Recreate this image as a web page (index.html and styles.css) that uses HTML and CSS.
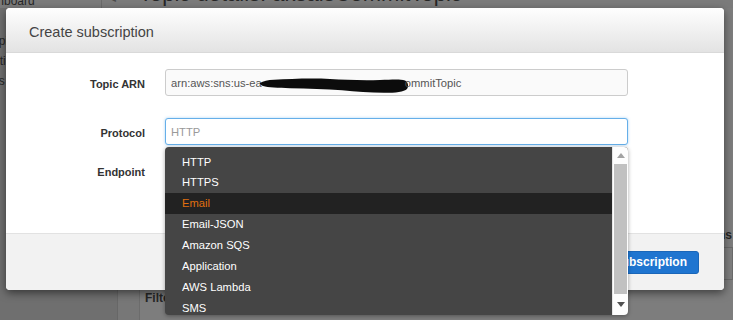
FILE: index.html
```html
<!DOCTYPE html>
<html>
<head>
<meta charset="utf-8">
<title>Create subscription</title>
<link rel="stylesheet" href="styles.css">
</head>
<body>
<div class="page">
  <header class="topbar">
    <div class="crumb"><span class="crumb-text">Dashboard</span></div>
    <span class="back">&#9664;</span>
    <h1 class="page-title">Topic details: aksalsCommitTopic</h1>
  </header>
  <div class="content">
    <nav class="sidebar">
      <div class="nav-item nav-topics">Topics</div>
      <div class="nav-item nav-subs">Subscriptions</div>
      <div class="nav-item nav-apps">Applications</div>
    </nav>
    <main class="main">
      <div class="panel">
        <div class="panel-tools"><span class="panel-label">Other subscription actions</span></div>
        <div class="panel-box"></div>
        <div class="filter-row"><span class="filter-label">Filter</span></div>
      </div>
    </main>
  </div>
</div>

<div class="modal">
  <div class="modal-header">Create subscription</div>
  <div class="modal-body">
    <div class="form-row">
      <label class="form-label">Topic ARN</label>
      <div class="field">
        <div class="input input-readonly"><span>arn:aws:sns:us-ea</span><span class="redacted"><svg width="148" height="20" viewBox="0 0 148 20"><path d="M0,9 C3,7 8,6 14,5.8 C30,5 50,4 70,5 C85,5.8 100,6.5 120,6 C132,5.7 140,5 145,6.5 C148,8 149,12 147,15 C144,18 136,18.8 124,18.8 C110,18.6 96,17.8 82,16.2 C66,15 48,14.6 30,14.2 C18,14 8,13.4 3,12 C1,11.4 -0.5,10 0,9 Z" fill="#0c0c0c"/></svg></span><span>ommitTopic</span></div>
      </div>
    </div>
    <div class="form-row row-protocol">
      <label class="form-label">Protocol</label>
      <div class="field">
        <input class="input input-focus" type="text" placeholder="HTTP">
        <div class="dropdown">
          <ul class="options">
            <li class="option">HTTP</li>
            <li class="option">HTTPS</li>
            <li class="option option-active">Email</li>
            <li class="option">Email-JSON</li>
            <li class="option">Amazon SQS</li>
            <li class="option">Application</li>
            <li class="option">AWS Lambda</li>
            <li class="option">SMS</li>
          </ul>
          <div class="scrollbar">
            <div class="scroll-btn">
              <svg width="8" height="5" viewBox="0 0 8 5"><polygon points="0,5 4,0 8,5" fill="#a3a3a3"/></svg>
            </div>
            <div class="thumb"></div>
            <div class="scroll-btn scroll-btn-down">
              <svg width="8" height="5" viewBox="0 0 8 5"><polygon points="0,0 8,0 4,5" fill="#505050"/></svg>
            </div>
          </div>
        </div>
      </div>
    </div>
    <div class="form-row row-endpoint">
      <label class="form-label">Endpoint</label>
      <div class="field">
        <input class="input" type="text">
      </div>
    </div>
  </div>
  <div class="modal-footer">
    <button class="btn btn-cancel">Cancel</button>
    <button class="btn btn-primary">Create subscription</button>
  </div>
</div>
</body>
</html>
```

FILE: styles.css
```css
* { box-sizing: border-box; }

html, body {
  margin: 0;
  padding: 0;
}

body {
  width: 733px;
  height: 320px;
  overflow: hidden;
  position: relative;
  background: #7a7a7a;
  font-family: "Liberation Sans", Arial, sans-serif;
  font-size: 12px;
  color: #222;
}

/* ---------- dimmed page behind the modal ---------- */
.page {
  display: flex;
  flex-direction: column;
  height: 320px;
}

.topbar {
  display: flex;
  align-items: flex-start;
  height: 8px;
  overflow: hidden;
  background: #7b7b7b;
  flex-shrink: 0;
}

.crumb {
  width: 102px;
  height: 8px;
  border-right: 1px solid #6a6a6a;
  overflow: hidden;
  flex-shrink: 0;
}

.crumb-text {
  display: block;
  margin-top: -6px;
  margin-left: -24px;
  font-size: 12px;
  line-height: 14px;
  color: #262626;
}

.back {
  margin: -8px 0 0 7px;
  font-size: 9px;
  line-height: 12px;
  color: #4a4a4a;
}

.page-title {
  margin: -17px 0 0 23px;
  font-size: 22px;
  font-weight: normal;
  line-height: 22px;
  color: #262626;
  white-space: nowrap;
}

.content {
  display: flex;
  flex: 1;
}

.sidebar {
  width: 118px;
  flex-shrink: 0;
  background: #6f6f6f;
  border-right: 1px solid #676767;
  padding-top: 23px;
  overflow: hidden;
}

.nav-item {
  line-height: 20px;
  font-size: 12px;
  color: #262626;
  white-space: nowrap;
}

.nav-topics { text-indent: -14px; }
.nav-subs { text-indent: -47px; }
.nav-apps { text-indent: -60px; }

.main {
  flex: 1;
  padding-left: 21px;
  background: #777;
  overflow: hidden;
}

.panel {
  height: 100%;
  border-left: 1px solid #6c6c6c;
  background: #7d7d7d;
  padding-top: 218px;
}

.panel-tools {
  display: flex;
  justify-content: flex-end;
  padding-right: 1px;
  height: 18px;
  line-height: 18px;
}

.panel-label {
  font-weight: bold;
  color: #262626;
  white-space: nowrap;
}

.panel-box {
  margin: 3px 0 0 auto;
  width: 300px;
  height: 33px;
  border: 1px solid #6a6a6a;
  background: #7f7f7f;
}

.filter-row {
  margin-top: 10px;
  padding-left: 5px;
  line-height: 17px;
}

.filter-label {
  font-weight: bold;
  color: #262626;
}

/* ---------- modal ---------- */
.modal {
  position: absolute;
  left: 6px;
  top: 8px;
  width: 718px;
  height: 282px;
  display: flex;
  flex-direction: column;
  background: #fff;
  border-radius: 4px;
  box-shadow: 0 3px 9px rgba(0, 0, 0, 0.5);
}

.modal-header {
  height: 45px;
  flex-shrink: 0;
  display: flex;
  align-items: center;
  padding: 3px 23px 0;
  background: linear-gradient(#fefefe, #e3e3e3);
  border-bottom: 1px solid #d9d9d9;
  border-radius: 4px 4px 0 0;
  font-size: 14.5px;
  color: #444;
}

.modal-body {
  flex: 1;
  padding-top: 16px;
}

.form-row {
  display: grid;
  grid-template-columns: 139px 463px;
  column-gap: 20px;
  align-items: center;
}

.row-protocol { margin-top: 22px; }
.row-endpoint { margin-top: 12px; }

.form-label {
  text-align: right;
  font-weight: bold;
  font-size: 11px;
  color: #333;
  padding-top: 2px;
}

.field {
  position: relative;
}

.input {
  display: block;
  width: 463px;
  height: 27px;
  margin: 0;
  padding: 0 5px;
  border: 1px solid #ccc;
  border-radius: 3px;
  background: #fff;
  font-family: "Liberation Sans", Arial, sans-serif;
  font-size: 11.2px;
  color: #555;
  outline: none;
}

.input-readonly {
  display: flex;
  align-items: center;
  white-space: nowrap;
  overflow: hidden;
  background: #fafafa;
}

.redacted {
  display: flex;
  flex-shrink: 0;
  margin: 0 -3px 0 -2px;
  padding-top: 2px;
}

.input-focus {
  border-color: #66afe9;
  box-shadow: 0 0 3px rgba(102, 175, 233, 0.55);
}

.input::placeholder {
  color: #999;
}

/* ---------- dropdown ---------- */
.dropdown {
  position: absolute;
  left: 0;
  top: 29px;
  width: 463px;
  height: 168px;
  display: flex;
  background: #454545;
  border-radius: 4px;
  overflow: hidden;
  box-shadow: 0 1px 4px rgba(0, 0, 0, 0.35);
  z-index: 2;
}

.options {
  flex: 1;
  margin: 0;
  padding: 4.6px 0 0;
  list-style: none;
}

.option {
  height: 20.85px;
  line-height: 20.85px;
  padding-left: 17px;
  font-size: 11.2px;
  color: #fff;
}

.option-active {
  background: #222;
  color: #e0700f;
}

.scrollbar {
  width: 16px;
  flex-shrink: 0;
  display: flex;
  flex-direction: column;
  background: #fdfdfd;
  border-left: 1px solid #e6e6e6;
}

.scroll-btn {
  height: 17px;
  display: flex;
  align-items: center;
  justify-content: center;
}

.scroll-btn-down {
  height: 21px;
}

.thumb {
  height: 130px;
  margin: 0 1px;
  background: #c1c1c1;
}

/* ---------- footer ---------- */
.modal-footer {
  height: 57px;
  flex-shrink: 0;
  display: flex;
  justify-content: flex-end;
  align-items: center;
  gap: 6px;
  padding: 0 25px 0 0;
  background: #f2f2f2;
  border-top: 1px solid #e2e2e2;
  border-radius: 0 0 4px 4px;
}

.btn {
  height: 23px;
  padding: 0 11px;
  border-radius: 3px;
  font-family: "Liberation Sans", Arial, sans-serif;
  font-size: 12px;
  font-weight: bold;
  cursor: pointer;
}

.btn-cancel {
  background: #fff;
  border: 1px solid #ccc;
  color: #333;
}

.btn-primary {
  background: #1f75d0;
  border: 1px solid #1a66b8;
  color: #fff;
}
```
